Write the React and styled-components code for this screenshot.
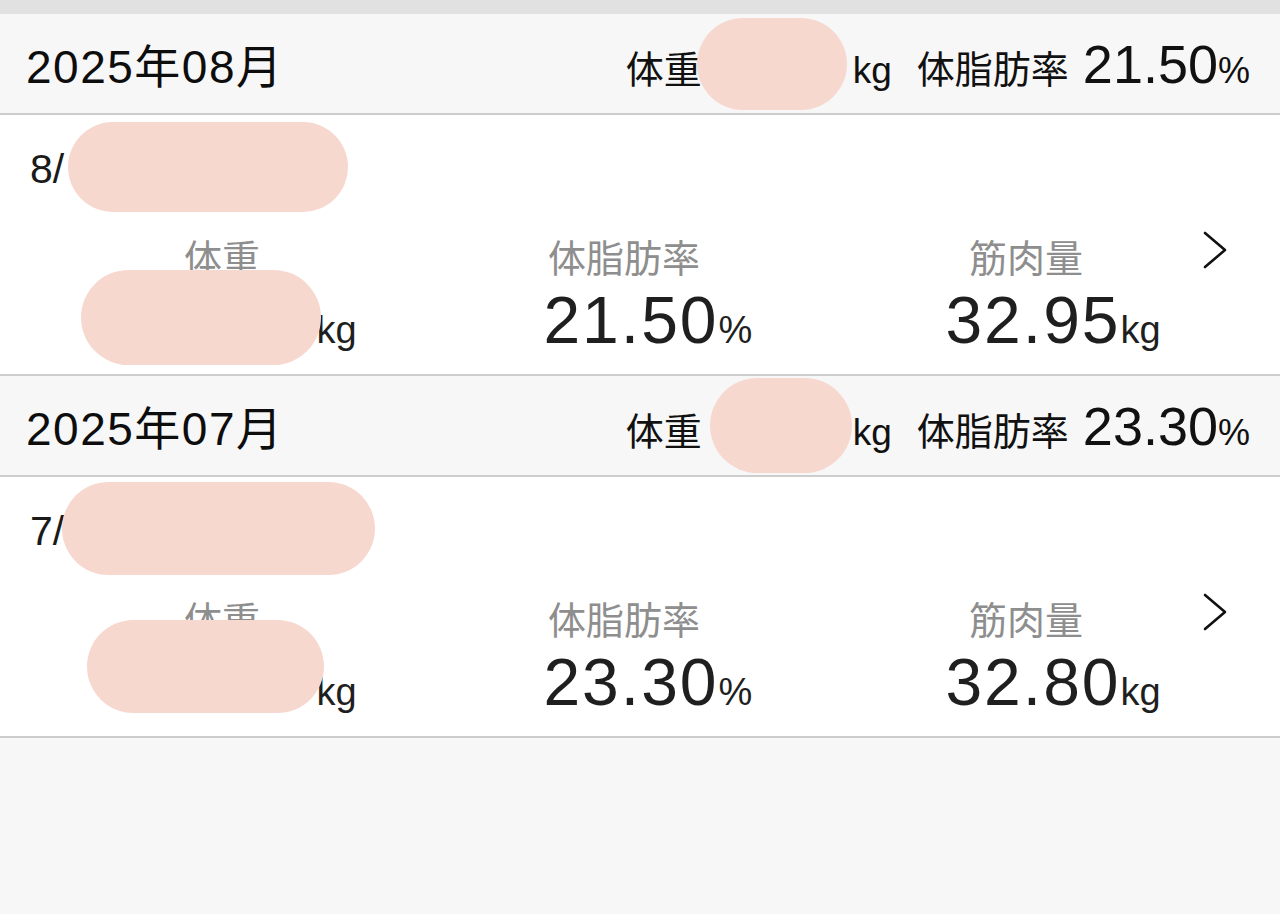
import React from 'react'
import styled, { createGlobalStyle } from 'styled-components'

const GlobalStyle = createGlobalStyle`
  html, body {
    margin: 0;
    padding: 0;
    background: #f7f7f7;
  }
  body {
    font-family: "Liberation Sans", "Noto Sans CJK JP", sans-serif;
    color: #111;
  }
`

const months = [
  {
    title: '2025年08月',
    fat: '21.50',
    weightBlob: { left: -5, top: -64, width: 150, height: 92 },
    entry: {
      day: '8/',
      dateBlob: { left: 4, top: -60, width: 280, height: 90 },
      valueBlob: { left: -61, top: -72, width: 240, height: 95 },
      fat: '21.50',
      muscle: '32.95',
    },
  },
  {
    title: '2025年07月',
    fat: '23.30',
    weightBlob: { left: 8, top: -66, width: 142, height: 95 },
    entry: {
      day: '7/',
      dateBlob: { left: -2, top: -62, width: 313, height: 93 },
      valueBlob: { left: -55, top: -84, width: 237, height: 93 },
      fat: '23.30',
      muscle: '32.80',
    },
  },
]

function Chevron() {
  return (
    <ChevronIcon width="26" height="38" viewBox="0 0 26 38">
      <polyline points="3,2 23,19 3,36" fill="none" stroke="#111" strokeWidth="2.6" strokeLinecap="round" strokeLinejoin="round" />
    </ChevronIcon>
  )
}

function Metric({ label, value, unit, blob }) {
  return (
    <MetricCell>
      <MetricLabel>{label}</MetricLabel>
      <ValueLine>
        {blob ? (
          <Hidden $w={175}>
            <Blob style={blob} />
          </Hidden>
        ) : (
          value
        )}
        <Unit>{unit}</Unit>
      </ValueLine>
    </MetricCell>
  )
}

function App() {
  return (
    <>
      <GlobalStyle />
      <Page>
        <TopBar />
        {months.map((m) => (
          <section key={m.title}>
            <MonthHeader>
              <MonthTitle>{m.title}</MonthTitle>
              <Summary>
                <SummaryLabel>体重</SummaryLabel>
                <Hidden $w={151}>
                  <Blob style={m.weightBlob} />
                </Hidden>
                <SummaryUnit>kg</SummaryUnit>
                <SummaryLabel $gap>体脂肪率</SummaryLabel>
                <SummaryValue>{m.fat}</SummaryValue>
                <SummaryUnit $small>%</SummaryUnit>
              </Summary>
            </MonthHeader>
            <EntryRow>
              <EntryDate>
                {m.entry.day}
                <Hidden $w={280}>
                  <Blob style={m.entry.dateBlob} />
                </Hidden>
              </EntryDate>
              <Metrics>
                <Metric label="体重" unit="kg" blob={m.entry.valueBlob} />
                <Metric label="体脂肪率" value={m.entry.fat} unit="%" />
                <Metric label="筋肉量" value={m.entry.muscle} unit="kg" />
              </Metrics>
              <Chevron />
            </EntryRow>
          </section>
        ))}
      </Page>
    </>
  )
}

export default App

const Page = styled.div`
  min-height: 914px;
  background: #f7f7f7;
`
const TopBar = styled.div`
  height: 14px;
  background: #e1e1e1;
`
const MonthHeader = styled.header`
  height: 101px;
  box-sizing: border-box;
  display: flex;
  align-items: baseline;
  justify-content: space-between;
  padding: 25px 30px 0 26px;
  background: #f7f7f7;
  border-bottom: 2px solid #cdcdcd;
`
const MonthTitle = styled.h2`
  margin: 0;
  font-size: 46px;
  line-height: 50px;
  font-weight: 400;
  color: #0d0d0d;
  letter-spacing: 1.5px;
`
const Summary = styled.div`
  display: flex;
  align-items: baseline;
  line-height: 50px;
`
const SummaryLabel = styled.span`
  font-size: 38px;
  margin-left: ${(p) => (p.$gap ? '25px' : '0')};
  margin-right: ${(p) => (p.$gap ? '14px' : '0')};
`
const SummaryValue = styled.span`
  font-size: 54px;
`
const SummaryUnit = styled.span`
  font-size: ${(p) => (p.$small ? '36px' : '37px')};
`
const Hidden = styled.span`
  position: relative;
  display: inline-block;
  width: ${(p) => p.$w}px;
  height: 1px;
`
const Blob = styled.span`
  position: absolute;
  background: #f7d8cf;
  border-radius: 48px;
  z-index: 2;
`
const EntryRow = styled.div`
  position: relative;
  height: 261px;
  box-sizing: border-box;
  padding: 32px 53px 0 21px;
  background: #fff;
  border-bottom: 2px solid #cdcdcd;
`
const EntryDate = styled.div`
  padding-left: 9px;
  font-size: 41px;
  line-height: 44px;
  color: #1a1a1a;
`
const Metrics = styled.div`
  display: grid;
  grid-template-columns: repeat(3, 1fr);
  margin-top: 48px;
`
const MetricCell = styled.div`
  display: flex;
  flex-direction: column;
  align-items: center;
`
const MetricLabel = styled.span`
  font-size: 38px;
  line-height: 40px;
  color: #8e8e8e;
`
const ValueLine = styled.span`
  position: relative;
  margin-left: 14px;
  font-size: 66px;
  line-height: 82px;
  color: #1f1f1f;
  letter-spacing: 2px;
`
const Unit = styled.span`
  position: absolute;
  left: 100%;
  bottom: 12px;
  font-size: 38px;
  line-height: 38px;
  letter-spacing: 0;
`
const ChevronIcon = styled.svg`
  position: absolute;
  right: 52px;
  top: 116px;
`
